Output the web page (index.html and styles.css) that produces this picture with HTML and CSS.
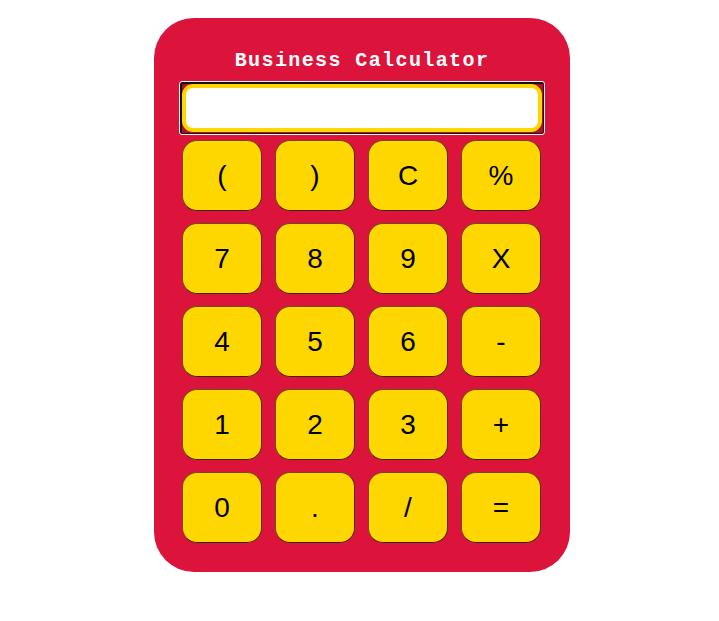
FILE: index.html
```html
<!DOCTYPE html>
<html>
<head>
<meta charset="utf-8">
<link rel="stylesheet" href="styles.css">
</head>
<body>
<div class="page">
  <div class="calc">
    <h1 class="title">Business Calculator</h1>
    <div class="display-frame"><div class="display"></div></div>
    <div class="keys">
      <div class="key">(</div><div class="key">)</div><div class="key">C</div><div class="key">%</div>
      <div class="key">7</div><div class="key">8</div><div class="key">9</div><div class="key">X</div>
      <div class="key">4</div><div class="key">5</div><div class="key">6</div><div class="key">-</div>
      <div class="key">1</div><div class="key">2</div><div class="key">3</div><div class="key">+</div>
      <div class="key">0</div><div class="key">.</div><div class="key">/</div><div class="key">=</div>
    </div>
  </div>
</div>
</body>
</html>
```
FILE: styles.css
```css
html, body { margin: 0; padding: 0; background: #fff; }
.page {
  display: flex;
  justify-content: center;
  padding: 18px 0 0 5px;
}
.calc {
  width: 416px;
  height: 554px;
  box-sizing: border-box;
  background: #dc143c;
  border-radius: 40px;
  padding: 0 25px;
  display: flex;
  flex-direction: column;
}
.title {
  margin: 33px 0 0 0;
  height: 20px;
  line-height: 20px;
  text-align: center;
  font-family: "Nimbus Mono PS", "Nimbus Mono", "Courier New", Courier, "Liberation Mono", monospace;
  font-weight: bold;
  font-size: 20px;
  letter-spacing: 1.4px;
  color: #fff;
}
.display-frame {
  margin-top: 10px;
  height: 54px;
  box-sizing: border-box;
  border: 1px solid #f4f4f4;
  border-radius: 3px;
  box-shadow: inset 2px 2px 0 #111, inset -1px -1px 0 #111;
  padding: 2px 2px 2px 2px;
  background: #b01030;
}
.display {
  height: 100%;
  box-sizing: border-box;
  border: 4px solid #ffd700;
  border-radius: 11px;
  background: #fff;
}
.keys {
  margin-top: 5px;
  padding: 0 4px 0 3px;
  display: grid;
  grid-template-columns: repeat(4, 80px);
  grid-auto-rows: 71px;
  gap: 12px 13px;
}
.key {
  box-sizing: border-box;
  background: #ffd700;
  border: 1px solid #6b4a2a;
  border-bottom-color: #3a2410;
  border-right-color: #4a3018;
  border-radius: 15px;
  display: flex;
  align-items: center;
  justify-content: center;
  font-family: "Liberation Sans", Arial, sans-serif;
  font-size: 28px;
  color: #000;
}
```
